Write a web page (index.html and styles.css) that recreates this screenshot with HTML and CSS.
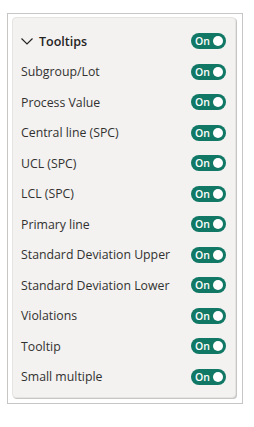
FILE: index.html
```html
<!DOCTYPE html>
<html lang="en">
<head>
    <meta charset="UTF-8">
    <meta name="viewport" content="width=device-width, initial-scale=1.0">
    <title>Tooltips</title>
    <link rel="stylesheet" href="styles.css">
</head>
<body>
    <div class="frame">
        <div class="panel">
            <div class="row header">
                <span class="title">
                    <svg class="chevron" width="12" height="7" viewBox="0 0 12 7">
                        <path d="M0.5 0.5 L6 6 L11.5 0.5" fill="none" stroke="#252423" stroke-width="1.2"/>
                    </svg>
                    Tooltips
                </span>
                <span class="toggle">On</span>
            </div>
            <div class="row"><span>Subgroup/Lot</span><span class="toggle">On</span></div>
            <div class="row"><span>Process Value</span><span class="toggle">On</span></div>
            <div class="row"><span>Central line (SPC)</span><span class="toggle">On</span></div>
            <div class="row"><span>UCL (SPC)</span><span class="toggle">On</span></div>
            <div class="row"><span>LCL (SPC)</span><span class="toggle">On</span></div>
            <div class="row"><span>Primary line</span><span class="toggle">On</span></div>
            <div class="row"><span>Standard Deviation Upper</span><span class="toggle">On</span></div>
            <div class="row"><span>Standard Deviation Lower</span><span class="toggle">On</span></div>
            <div class="row"><span>Violations</span><span class="toggle">On</span></div>
            <div class="row"><span>Tooltip</span><span class="toggle">On</span></div>
            <div class="row"><span>Small multiple</span><span class="toggle">On</span></div>
        </div>
    </div>
</body>
</html>
```

FILE: styles.css
```css
body {
    margin: 0;
    padding: 0;
    background-color: white;
    font-family: 'Open Sans', 'Noto Sans', sans-serif;
    color: #323130;
}

.frame {
    margin: 13px 0 0 7px;
    width: 229px;
    height: 386px;
    border: 1px solid #c8c6c4;
    background-color: white;
    padding: 3px 1px 0 4px;
    box-sizing: content-box;
}

.panel {
    box-sizing: border-box;
    width: 224px;
    height: 381px;
    background-color: #f3f2f1;
    border: 1px solid #e6e4e2;
    border-radius: 4px;
    box-shadow: 1px 1px 0 #c8c6c4;
    padding: 8px 9px 0 8px;
}

.row {
    display: flex;
    align-items: center;
    justify-content: space-between;
    height: 30.5px;
    font-size: 12.3px;
}

.header .title {
    display: flex;
    align-items: center;
    gap: 6px;
    font-size: 12.5px;
    font-weight: 600;
    color: #252423;
}

.toggle {
    box-sizing: border-box;
    position: relative;
    width: 35px;
    height: 16px;
    border-radius: 8px;
    background-color: #117865;
    color: white;
    font-size: 10.5px;
    font-weight: 600;
    line-height: 16px;
    padding-left: 4px;
}

.toggle::after {
    content: '';
    position: absolute;
    right: 3px;
    top: 3px;
    width: 10px;
    height: 10px;
    border-radius: 50%;
    background-color: white;
}
```
